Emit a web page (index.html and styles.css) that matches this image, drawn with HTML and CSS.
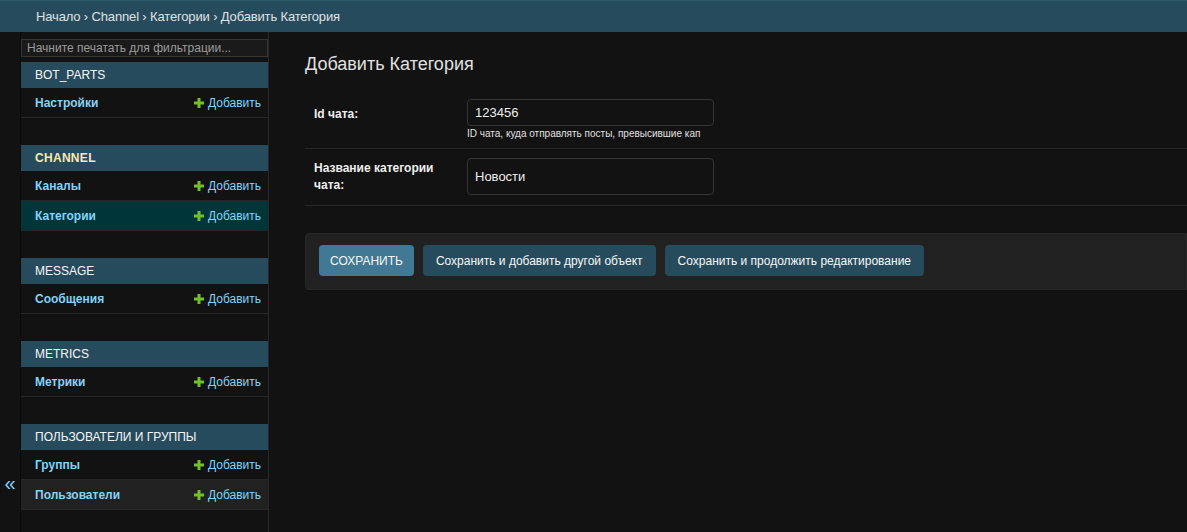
FILE: index.html
```html
<!DOCTYPE html>
<html lang="ru">
<head>
<meta charset="utf-8">
<title>Добавить Категория</title>
<link rel="stylesheet" href="styles.css">
</head>
<body>
<div class="breadcrumbs"><a href="#">Начало</a> › <a href="#">Channel</a> › <a href="#">Категории</a> › Добавить Категория</div>
<div class="main">
  <div class="toggle"><span class="toggle-icon">«</span></div>
  <nav class="sidebar">
    <input class="filter" type="search" placeholder="Начните печатать для фильтрации...">
    <div class="module">
      <div class="caption">BOT_PARTS</div>
      <div class="row"><a class="model" href="#">Настройки</a><a class="add" href="#"><svg class="plus" viewBox="0 0 10 10"><path d="M5 0V10M0 5H10"/></svg>Добавить</a></div>
    </div>
    <div class="module">
      <div class="caption current">CHANNEL</div>
      <div class="row"><a class="model" href="#">Каналы</a><a class="add" href="#"><svg class="plus" viewBox="0 0 10 10"><path d="M5 0V10M0 5H10"/></svg>Добавить</a></div>
      <div class="row selected"><a class="model" href="#">Категории</a><a class="add" href="#"><svg class="plus" viewBox="0 0 10 10"><path d="M5 0V10M0 5H10"/></svg>Добавить</a></div>
    </div>
    <div class="module">
      <div class="caption">MESSAGE</div>
      <div class="row"><a class="model" href="#">Сообщения</a><a class="add" href="#"><svg class="plus" viewBox="0 0 10 10"><path d="M5 0V10M0 5H10"/></svg>Добавить</a></div>
    </div>
    <div class="module">
      <div class="caption">METRICS</div>
      <div class="row"><a class="model" href="#">Метрики</a><a class="add" href="#"><svg class="plus" viewBox="0 0 10 10"><path d="M5 0V10M0 5H10"/></svg>Добавить</a></div>
    </div>
    <div class="module">
      <div class="caption">ПОЛЬЗОВАТЕЛИ И ГРУППЫ</div>
      <div class="row"><a class="model" href="#">Группы</a><a class="add" href="#"><svg class="plus" viewBox="0 0 10 10"><path d="M5 0V10M0 5H10"/></svg>Добавить</a></div>
      <div class="row hover"><a class="model" href="#">Пользователи</a><a class="add" href="#"><svg class="plus" viewBox="0 0 10 10"><path d="M5 0V10M0 5H10"/></svg>Добавить</a></div>
    </div>
  </nav>
  <div class="content">
    <h1>Добавить Категория</h1>
    <form class="form">
      <div class="form-row first">
        <label class="label">Id чата:</label>
        <div class="field">
          <input class="input" type="text" value="123456">
          <div class="help">ID чата, куда отправлять посты, превысившие кап</div>
        </div>
      </div>
      <div class="form-row second">
        <label class="label">Название категории чата:</label>
        <div class="field">
          <input class="input tall" type="text" value="Новости">
        </div>
      </div>
      <div class="submit-row">
        <button class="btn default" type="button">СОХРАНИТЬ</button>
        <button class="btn" type="button">Сохранить и добавить другой объект</button>
        <button class="btn" type="button">Сохранить и продолжить редактирование</button>
      </div>
    </form>
  </div>
</div>
</body>
</html>
```
FILE: styles.css
```css
* { box-sizing: border-box; }
html, body { height: 100%; }
body {
  margin: 0;
  background: #121212;
  color: #eeeeee;
  font-family: "Liberation Sans", Arial, sans-serif;
  font-size: 13px;
  display: flex;
  flex-direction: column;
  overflow: hidden;
}
a { text-decoration: none; }

.breadcrumbs {
  height: 32px;
  flex: none;
  background: #264b5d;
  border-top: 1px solid #2f5a6e;
  color: #e0e0e0;
  font-size: 13px;
  letter-spacing: -0.15px;
  padding: 0 36px;
  display: flex;
  align-items: center;
  white-space: pre;
}
.breadcrumbs a { color: #e0e0e0; }

.main { flex: 1; display: flex; min-height: 0; }

.toggle {
  width: 21px;
  flex: none;
  border-right: 1px solid #0b0b0b;
  background: #121212;
  display: flex;
  align-items: flex-end;
  justify-content: center;
  padding-bottom: 42px;
}
.toggle-icon { color: #81d4fa; font-size: 20px; line-height: 14px; }

.sidebar {
  width: 248px;
  flex: none;
  border-right: 1px solid #272727;
  padding-top: 7px;
}
.filter {
  display: block;
  width: 247px;
  height: 18px;
  margin: 0 0 5px;
  padding: 0 5px;
  background: #1a1a1a;
  border: 1px solid #353535;
  color: #eee;
  font-family: inherit;
  font-size: 12px;
  outline: none;
}
.filter::placeholder { color: #9a9a9a; }

.module { margin-bottom: 27px; }
.caption {
  height: 26px;
  background: #264b5d;
  color: #f7f7f7;
  font-size: 12px;
  padding-left: 14px;
  display: flex;
  align-items: center;
}
.caption.current { color: #f7eab0; font-weight: bold; letter-spacing: 0.3px; }
.row {
  height: 30px;
  border-bottom: 1px solid #272727;
  display: flex;
  align-items: center;
  justify-content: space-between;
  padding: 0 7px 0 14px;
}
.row.selected { background: #00363a; }
.row.hover { background: #212121; }
.model { color: #81d4fa; font-weight: bold; font-size: 12px; }
.add { color: #81d4fa; font-size: 12px; display: flex; align-items: center; gap: 4px; }
.plus { width: 10px; height: 10px; flex: none; }
.plus path { stroke: #70bf2b; stroke-width: 3; fill: none; }

.content { flex: 1; padding: 20px 0 0 36px; min-width: 0; }
h1 {
  margin: 0 0 13px;
  font-size: 18px;
  font-weight: 300;
  color: #e0e0e0;
  line-height: 24px;
}

.form-row {
  display: flex;
  padding: 10px 0 10px 9px;
  border-bottom: 1px solid #272727;
}
.form-row.first { padding-bottom: 8px; }
.form-row.second { padding-top: 9px; }
.label {
  width: 153px;
  flex: none;
  font-weight: bold;
  color: #eee;
  font-size: 12px;
  line-height: 17px;
  padding-top: 2px;
  padding-right: 30px;
}
.form-row.first .label { padding-top: 7px; }
.field { display: flex; flex-direction: column; }
.input {
  width: 247px;
  height: 27px;
  background: #121212;
  border: 1px solid #353535;
  border-radius: 4px;
  color: #eee;
  font-family: inherit;
  font-size: 13px;
  padding: 0 7px;
  outline: none;
}
.input.tall { height: 37px; }
.help { color: #e0e0e0; font-size: 10px; line-height: 12px; margin-top: 2px; }

.submit-row {
  margin-top: 27px;
  background: #212121;
  border: 1px solid #272727;
  border-radius: 4px 0 0 4px;
  padding: 11px 13px 13px;
  display: flex;
  gap: 9px;
}
.btn {
  height: 31px;
  background: #264b5d;
  color: #f7f7f7;
  border: none;
  border-radius: 4px;
  font-family: inherit;
  font-size: 12px;
  padding: 0 13px;
}
.btn.default { background: #417893; padding: 0 11px; }
```
